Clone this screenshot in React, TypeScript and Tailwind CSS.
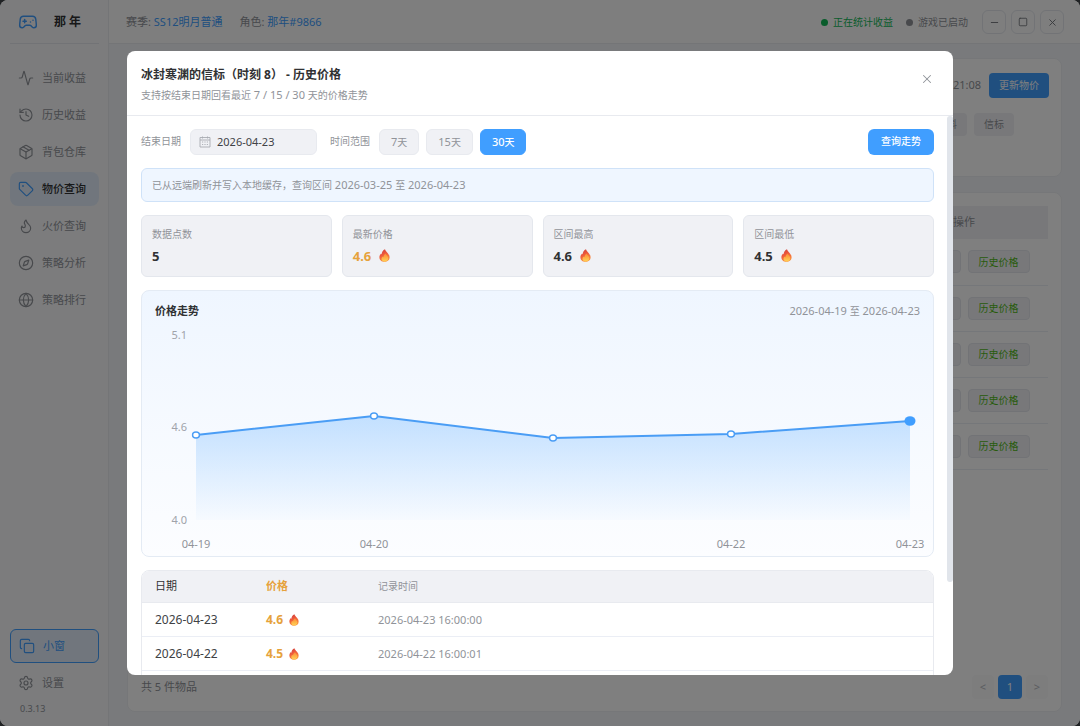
import { useState } from 'react'
import {
  Activity,
  Compass,
  Copy,
  Flame,
  Gamepad2,
  Globe,
  History,
  Minus,
  Package,
  Settings,
  Square,
  Tag,
  X,
} from 'lucide-react'

const NAV = [
  { label: '当前收益', icon: Activity },
  { label: '历史收益', icon: History },
  { label: '背包仓库', icon: Package },
  { label: '物价查询', icon: Tag, active: true },
  { label: '火价查询', icon: Flame },
  { label: '策略分析', icon: Compass },
  { label: '策略排行', icon: Globe },
]

const ITEM_IDS = [1, 2, 3, 4, 5]

const RANGES = [7, 15, 30]

const STATS = [
  { label: '数据点数', value: '5' },
  { label: '最新价格', value: '4.6', fire: true, highlight: true },
  { label: '区间最高', value: '4.6', fire: true },
  { label: '区间最低', value: '4.5', fire: true },
]

const RECORDS = [
  { date: '2026-04-23', price: '4.6', time: '2026-04-23 16:00:00' },
  { date: '2026-04-22', price: '4.5', time: '2026-04-22 16:00:01' },
]

// Chart coordinates, in viewBox units
const POINTS = [
  { x: 41, y: 113, label: '04-19' },
  { x: 219, y: 94, label: '04-20' },
  { x: 398, y: 116, label: '' },
  { x: 576, y: 112, label: '04-22' },
  { x: 755, y: 99, label: '04-23' },
]
const BASELINE = 198
const Y_TICKS = [
  { y: 13, label: '5.1' },
  { y: 105, label: '4.6' },
  { y: 198, label: '4.0' },
]

function FireIcon({ className }: { className: string }) {
  return (
    <svg viewBox="0 0 22 26" className={className} aria-hidden="true">
      <defs>
        <linearGradient id="fire-outer" x1="0" y1="0" x2="0.4" y2="1">
          <stop offset="0" stopColor="#c93a3a" />
          <stop offset="0.5" stopColor="#ee5a3c" />
          <stop offset="1" stopColor="#fb8f3c" />
        </linearGradient>
        <linearGradient id="fire-inner" x1="0" y1="0" x2="0" y2="1">
          <stop offset="0" stopColor="#fb8a34" />
          <stop offset="1" stopColor="#ffd257" />
        </linearGradient>
      </defs>
      <path
        fill="url(#fire-outer)"
        d="M12 0.500c0.600 3.200 3.400 4.900 5.600 7.800 2.200 2.800 3.600 5.300 3.600 8.400 0 5.600-4.400 9-10.200 9S0.800 22 0.800 16.400c0-3.400 1.500-5.400 3.400-7.600 0.300 0.800 0.600 1.300 1.200 1.700 0-4.500 2.600-8.100 6.600-10z"
      />
      <path
        fill="url(#fire-inner)"
        d="M13.500 9c0.400 2.600 5 5.100 5 9.700 0 4-3 6.300-7 6.300s-6.500-2.300-6.500-5.600c0-2 0.900-3.400 2.200-4.600 0.400 0.800 0.900 1.300 1.700 1.500 0.300-3 1.800-5.900 4.600-7.300z"
      />
    </svg>
  )
}

function CalendarIcon() {
  return (
    <svg viewBox="0 0 12 12" className="size-3 shrink-0 text-[#a8abb2]" fill="none" stroke="currentColor" aria-hidden="true">
      <path d="M1 1.500h10v9.500H1zM1 4h10M3.500 0.500v2M8.500 0.500v2" strokeWidth="0.900" />
      <path d="M3 6h1.200M5.400 6h1.200M7.800 6h1.200M3 8.500h1.200M5.400 8.500h1.200M7.800 8.500h1.200" strokeWidth="0.900" />
    </svg>
  )
}

function Sidebar() {
  return (
    <aside className="flex w-[109px] shrink-0 flex-col border-r border-[#e9ebef] bg-[#f8f9fb] pb-[11px] pl-[10px] pr-[9px]">
      <div className="flex h-[44px] shrink-0 items-center gap-4 border-b border-[#e4e7ed] pl-2">
        <Gamepad2 size={20} strokeWidth={1.75} className="text-[#409eff]" />
        <span className="text-xs font-bold text-[#303133]">那 年</span>
      </div>

      <nav className="mt-[17px] flex flex-col gap-[3px]">
        {NAV.map(({ label, icon: Icon, active }) => (
          <a
            key={label}
            href="#"
            className={`flex h-[34px] items-center gap-2 rounded-lg pl-2 text-[11px] ${
              active ? 'bg-[#e2edfa] font-medium text-[#303133]' : 'text-[#909399]'
            }`}
          >
            <Icon size={16} strokeWidth={1.75} className={active ? 'text-[#409eff]' : ''} />
            {label}
          </a>
        ))}
      </nav>

      <div className="mt-auto flex flex-col gap-[3px]">
        <button className="flex h-[34px] items-center gap-2 rounded-md border border-[#409eff] bg-[#e2edfa] pl-2 text-[11px] text-[#409eff]">
          <Copy size={16} strokeWidth={1.75} />
          小窗
        </button>
        <button className="flex h-[34px] items-center gap-2 pl-2 text-[11px] text-[#909399]">
          <Settings size={16} strokeWidth={1.75} />
          设置
        </button>
        <span className="pl-[10px] text-[9px] leading-3 text-[#909399]">0.3.13</span>
      </div>
    </aside>
  )
}

function TopBar() {
  const winBtn = 'flex size-6 items-center justify-center rounded-md border border-[#e4e7ed] text-[#707379]'
  return (
    <header className="flex h-[44px] shrink-0 items-center border-b border-[#e9ebef] bg-[#fdfdfd] pl-[17px] pr-4 pt-px text-[11px] text-[#909399]">
      <span>
        赛季: <span className="text-[#409eff]">SS12明月普通</span>
      </span>
      <span className="ml-[17px]">
        角色: <span className="text-[#409eff]">那年#9866</span>
      </span>

      <div className="ml-auto flex items-center text-[10px]">
        <span className="mr-[5px] size-[7px] rounded-full bg-[#12b857]" />
        <span className="text-[#12b857]">正在统计收益</span>
        <span className="ml-[13px] mr-[5px] size-[7px] rounded-full bg-[#909399]" />
        <span>游戏已启动</span>
      </div>

      <div className="ml-[14px] flex gap-[5px]">
        <button className={winBtn} aria-label="最小化">
          <Minus size={11} strokeWidth={2} />
        </button>
        <button className={winBtn} aria-label="最大化">
          <Square size={10} strokeWidth={2} />
        </button>
        <button className={winBtn} aria-label="关闭窗口">
          <X size={11} strokeWidth={2} />
        </button>
      </div>
    </header>
  )
}

function PricePage() {
  const pager = 'flex h-6 items-center justify-center rounded text-[11px]'
  return (
    <main className="flex flex-1 flex-col gap-[15px] bg-[#f3f5f8] px-[18px] py-[14px]">
      <section className="h-[119px] shrink-0 rounded-lg border border-[#eceef2] bg-white px-3 py-[14px]">
        <div className="flex items-center justify-end gap-2">
          <span className="text-[11px] text-[#909399]">21:08</span>
          <button className="h-[25px] rounded bg-[#409eff] px-[10px] text-[10px] text-white">更新物价</button>
        </div>
        <div className="mr-[35px] mt-[15px] flex justify-end gap-[7px]">
          <button className="h-[23px] rounded bg-[#f0f1f5] px-[10px] text-[10px] text-[#909399]">燃料</button>
          <button className="h-[23px] rounded bg-[#f0f1f5] px-[10px] text-[10px] text-[#909399]">信标</button>
        </div>
      </section>

      <section className="flex flex-1 flex-col rounded-lg border border-[#eceef2] bg-white p-[13px] pb-3">
        <table className="w-full table-fixed text-[10px]">
          <thead>
            <tr className="h-[33px] bg-[#f0f1f5] text-[#909399]">
              <th aria-label="物品" />
              <th className="w-[168px] text-[11px] font-normal">操作</th>
            </tr>
          </thead>
          <tbody>
            {ITEM_IDS.map(id => (
              <tr key={id} className="h-[46px] border-b border-[#ebeef5]">
                <td />
                <td>
                  <div className="flex justify-center gap-[7px]">
                    <button
                      className="h-[23px] w-[62px] rounded border border-[#e4e7ed] bg-[#f0f1f5]"
                      aria-label="编辑"
                    />
                    <button className="h-[23px] w-[62px] rounded border border-[#e4e7ed] bg-[#f0f1f5] pt-px text-[#52b818]">
                      历史价格
                    </button>
                  </div>
                </td>
              </tr>
            ))}
          </tbody>
        </table>

        <div className="mt-auto flex items-center justify-between">
          <span className="text-[11px] text-[#909399]">共 5 件物品</span>
          <div className="flex gap-1">
            <button className={`${pager} w-[22px] bg-[#fafafb] text-[#b5b8be]`}>&lt;</button>
            <button className={`${pager} w-6 bg-[#409eff] text-white`}>1</button>
            <button className={`${pager} w-[22px] bg-[#fafafb] text-[#b5b8be]`}>&gt;</button>
          </div>
        </div>
      </section>
    </main>
  )
}

function TrendChart() {
  const line = POINTS.map(p => `${p.x},${p.y}`).join(' ')
  const first = POINTS[0]
  const last = POINTS[POINTS.length - 1]

  return (
    <svg viewBox="0 0 765 230" className="mt-px block w-full overflow-visible">
      <defs>
        <linearGradient id="trend-area" x1="0" y1="0" x2="0" y2="1">
          <stop offset="0" stopColor="#409eff" stopOpacity="0.28" />
          <stop offset="1" stopColor="#409eff" stopOpacity="0.02" />
        </linearGradient>
      </defs>

      <g fill="#a0a3aa" fontSize="11" textAnchor="end">
        {Y_TICKS.map(t => (
          <text key={t.label} x="32" y={t.y + 4}>
            {t.label}
          </text>
        ))}
      </g>

      <polygon points={`${first.x},${BASELINE} ${line} ${last.x},${BASELINE}`} fill="url(#trend-area)" />
      <polyline points={line} fill="none" stroke="#4a9df5" strokeWidth="2" strokeLinejoin="round" />

      {POINTS.map(p =>
        p === last ? (
          <ellipse key={p.x} cx={p.x} cy={p.y} rx="5.500" ry="4.800" fill="#409eff" />
        ) : (
          <ellipse key={p.x} cx={p.x} cy={p.y} rx="3.400" ry="3" fill="#fff" stroke="#4a9df5" strokeWidth="1.500" />
        ),
      )}

      <g fill="#909399" fontSize="11" textAnchor="middle">
        {POINTS.filter(p => p.label).map(p => (
          <text key={p.label} x={p.x} y="226">
            {p.label}
          </text>
        ))}
      </g>
    </svg>
  )
}

function HistoryDialog() {
  const [range, setRange] = useState(30)

  return (
    <div
      role="dialog"
      aria-labelledby="history-title"
      className="relative flex h-[86vh] w-full max-w-[826px] flex-col overflow-hidden rounded-lg bg-white"
    >
      <div className="flex h-[65px] shrink-0 items-center justify-between border-b border-[#e8eaef] px-[14px]">
        <div className="mt-1">
          <h2 id="history-title" className="text-xs leading-5 font-bold text-[#303133]">
            冰封寒渊的信标（时刻 8） - 历史价格
          </h2>
          <p className="text-[10px] leading-5 text-[#909399]">
            支持按结束日期回看最近<span className="text-[11px]"> 7 / 15 / 30 </span>天的价格走势
          </p>
        </div>
        <button className="-mt-2 flex size-6 items-center justify-center text-[#909399]" aria-label="关闭">
          <X size={14} strokeWidth={1.75} />
        </button>
      </div>

      <div className="relative min-h-0 flex-1">
        <div className="flex h-full flex-col gap-[13px] overflow-y-auto py-[13px] pl-[14px] pr-[19px] [scrollbar-width:none]">
          <div className="flex shrink-0 items-center text-[10px] text-[#909399]">
            <label htmlFor="end-date">结束日期</label>
            <div className="ml-[9px] flex h-[26px] w-[127px] items-center gap-[6px] rounded-md border border-[#e8eaef] bg-[#f0f1f5] px-2">
              <CalendarIcon />
              <input
                id="end-date"
                type="text"
                defaultValue="2026-04-23"
                className="w-full min-w-0 bg-transparent text-[11px] text-[#404246] outline-none"
              />
            </div>
            <span className="ml-[13px] mr-[9px]">时间范围</span>
            <div className="flex gap-[7px]">
              {RANGES.map(days => (
                <button
                  key={days}
                  onClick={() => setRange(days)}
                  className={`h-[26px] rounded-md border px-[11px] text-[10px] ${
                    range === days
                      ? 'border-[#409eff] bg-[#409eff] font-medium text-white'
                      : 'border-[#e8eaef] bg-[#f0f1f5]'
                  }`}
                >
                  <span className="text-[11px]">{days}</span>天
                </button>
              ))}
            </div>
            <button className="ml-auto h-[26px] rounded-md bg-[#409eff] px-[13px] text-[10px] font-medium text-white">
              查询走势
            </button>
          </div>

          <p className="shrink-0 rounded-md border border-[#cfe2f8] bg-[#eff6ff] px-[10px] text-[10px] leading-8 text-[#909399]">
            已从远端刷新并写入本地缓存，查询区间
            <span className="text-[11px]"> 2026-03-25 </span>至<span className="text-[11px]"> 2026-04-23</span>
          </p>

          <div className="grid shrink-0 grid-cols-4 gap-[10px]">
            {STATS.map(s => (
              <div key={s.label} className="h-[62px] rounded-md border border-[#e4e7ed] bg-[#f0f1f5] px-[10px] pt-2">
                <div className="text-[10px] leading-5 text-[#909399]">{s.label}</div>
                <div
                  className={`flex items-center gap-2 text-[13px] leading-6 font-bold ${
                    s.highlight ? 'text-[#e6a23c]' : 'text-[#303133]'
                  }`}
                >
                  {s.value}
                  {s.fire && <FireIcon className="h-[13px] w-[11px]" />}
                </div>
              </div>
            ))}
          </div>

          <section className="shrink-0 rounded-lg border border-[#e4ebf4] bg-linear-to-b from-[#eff6ff] to-[#fcfdff] px-[13px] pb-1 pt-[10px]">
            <div className="flex items-center justify-between leading-5">
              <h3 className="text-[11px] font-bold text-[#303133]">价格走势</h3>
              <span className="text-[11px] text-[#909399]">
                2026-04-19 <span className="text-[10px]">至</span> 2026-04-23
              </span>
            </div>
            <TrendChart />
          </section>

          <div className="min-h-[202px] shrink-0 overflow-hidden rounded-lg border border-[#e8eaef]">
            <table className="w-full table-fixed text-left text-[11px] text-[#909399]">
              <thead>
                <tr className="h-8 border-b border-[#e8eaef] bg-[#f0f1f5]">
                  <th className="w-[124px] pl-[13px] font-normal text-[#303133]">日期</th>
                  <th className="w-[112px] font-bold text-[#e6a23c]">价格</th>
                  <th className="text-[10px] font-normal">记录时间</th>
                </tr>
              </thead>
              <tbody>
                {RECORDS.map(r => (
                  <tr key={r.date} className="h-[34px] border-b border-[#ebeef5]">
                    <td className="pl-[13px] text-xs text-[#404246]">{r.date}</td>
                    <td className="text-xs font-bold text-[#e6a23c]">
                      <span className="flex items-center gap-[6px]">
                        {r.price}
                        <FireIcon className="h-3 w-[10px]" />
                      </span>
                    </td>
                    <td>{r.time}</td>
                  </tr>
                ))}
              </tbody>
            </table>
          </div>
        </div>

        {/* Scroll thumb */}
        <div className="absolute right-0 top-0 h-5/6 w-[6px] rounded-sm bg-[#e1e5eb]" />
      </div>
    </div>
  )
}

export default function App() {
  return (
    <div className="min-h-screen bg-[#202224] font-['Noto_Sans','Noto_Sans_CJK_SC',sans-serif]">
      <div className="relative flex min-h-screen overflow-hidden rounded-lg">
        <Sidebar />
        <div className="flex min-w-0 flex-1 flex-col">
          <TopBar />
          <PricePage />
        </div>

        {/* Modal over the dimmed window */}
        <div className="absolute inset-0 flex items-center justify-center bg-black/50">
          <HistoryDialog />
        </div>
      </div>
    </div>
  )
}
